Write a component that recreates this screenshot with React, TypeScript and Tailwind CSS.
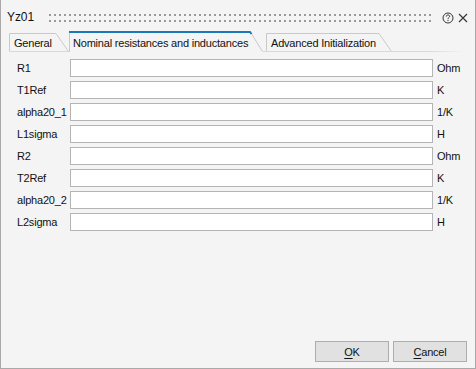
import React from "react";

function InactiveTab({ label, width }: { label: string; width: number }) {
  return (
    <div className="relative h-[19px] flex items-center" style={{ width }}>
      <svg className="absolute inset-0" width={width} height={19}>
        <path d={`M0.5 19 V0.5 H${width - 13} L${width - 0.5} 18.5`} fill="none" stroke="#c9c9c9" />
        <path d={`M0 18.5 H${width}`} stroke="#d9d9d9" />
      </svg>
      <span className="relative pl-[5px] leading-[16px] pt-[1px]">{label}</span>
    </div>
  );
}

function ActiveTab({ label, width }: { label: string; width: number }) {
  return (
    <div className="relative h-[21px] flex items-center" style={{ width }}>
      <svg className="absolute inset-0" width={width} height={21}>
        <path d={`M0.5 21 V1`} fill="none" stroke="#c9c9c9" />
        <path d={`M${width - 12} 2 L${width - 0.5} 20.5`} fill="none" stroke="#c9c9c9" />
        <path d={`M0 1 H${width - 13} L${width - 11.5} 3`} fill="none" stroke="#1a78b8" strokeWidth={2} />
      </svg>
      <span className="relative pl-[4px] leading-[16px] pt-[3px]">{label}</span>
    </div>
  );
}

const rows: [string, string][] = [
  ["R1", "Ohm"],
  ["T1Ref", "K"],
  ["alpha20_1", "1/K"],
  ["L1sigma", "H"],
  ["R2", "Ohm"],
  ["T2Ref", "K"],
  ["alpha20_2", "1/K"],
  ["L2sigma", "H"],
];

export default function App() {
  return (
    <div className="w-[476px] h-[369px] bg-[#f4f4f4] border-l border-r border-b border-[#a9a9a9] flex flex-col font-['Liberation_Sans',Arial,sans-serif] text-[11px] tracking-[-0.2px] text-[#111]">
      {/* title bar */}
      <div className="h-[31px] flex items-start pl-[6px] pt-[10px]">
        <span className="leading-[15px] text-[12px] tracking-[-0.1px]">Yz01</span>
        <svg className="ml-[15px] mt-[4px]" width={383} height={9}>
          <defs>
            <pattern id="grip" width="5" height="6" patternUnits="userSpaceOnUse">
              <rect x="0" y="0" width="2" height="2" fill="#9a9a9a" />
            </pattern>
          </defs>
          <rect x="0" y="0" width="383" height="9" fill="url(#grip)" />
        </svg>
        <svg className="ml-[10px] mt-[2px]" width={12} height={12} viewBox="0 0 12 12">
          <circle cx="6" cy="6" r="5" fill="none" stroke="#333" strokeWidth="1" />
          <path d="M4.3 4.6 C4.3 3.5 5 3 6 3 C7 3 7.7 3.6 7.7 4.4 C7.7 5.4 6 5.6 6 6.8" fill="none" stroke="#333" strokeWidth="1" />
          <rect x="5.5" y="7.8" width="1" height="1.2" fill="#333" />
        </svg>
        <svg className="ml-[4px] mt-[3px]" width={10} height={10} viewBox="0 0 10 10">
          <path d="M1 1 L9 9 M9 1 L1 9" stroke="#333" strokeWidth="1.1" />
        </svg>
      </div>

      {/* tabs */}
      <div className="h-[21px] flex items-end pl-[8px]">
        <InactiveTab label="General" width={60} />
        <ActiveTab label="Nominal resistances and inductances" width={194} />
        <div className="w-[3px] h-px bg-[#d9d9d9]" />
        <InactiveTab label="Advanced Initialization" width={126} />
        <div className="w-[72px] h-px bg-gradient-to-r from-[#d9d9d9] via-[#d9d9d9] to-transparent" />
      </div>

      {/* rows */}
      <div className="flex flex-col gap-[4px] pt-[7px] pl-[16px]">
        {rows.map(([label, unit]) => (
          <div key={label} className="flex items-center h-[18px]">
            <span className="w-[53px] leading-[16px]">{label}</span>
            <div className="w-[363px] h-[18px] bg-white border border-[#b4b4b4]" />
            <span className="ml-[4px] leading-[16px]">{unit}</span>
          </div>
        ))}
      </div>

      <div className="flex-1" />

      {/* footer */}
      <div className="flex justify-end gap-[4px] pr-[8px] pb-[6px]">
        <button className="w-[74px] h-[21px] bg-[#e1e1e1] border border-[#adadad] text-[11px] leading-[16px]">
          <span className="underline underline-offset-2">O</span>K
        </button>
        <button className="w-[74px] h-[21px] bg-[#e1e1e1] border border-[#adadad] text-[11px] leading-[16px]">
          <span className="underline underline-offset-2">C</span>ancel
        </button>
      </div>
    </div>
  );
}
